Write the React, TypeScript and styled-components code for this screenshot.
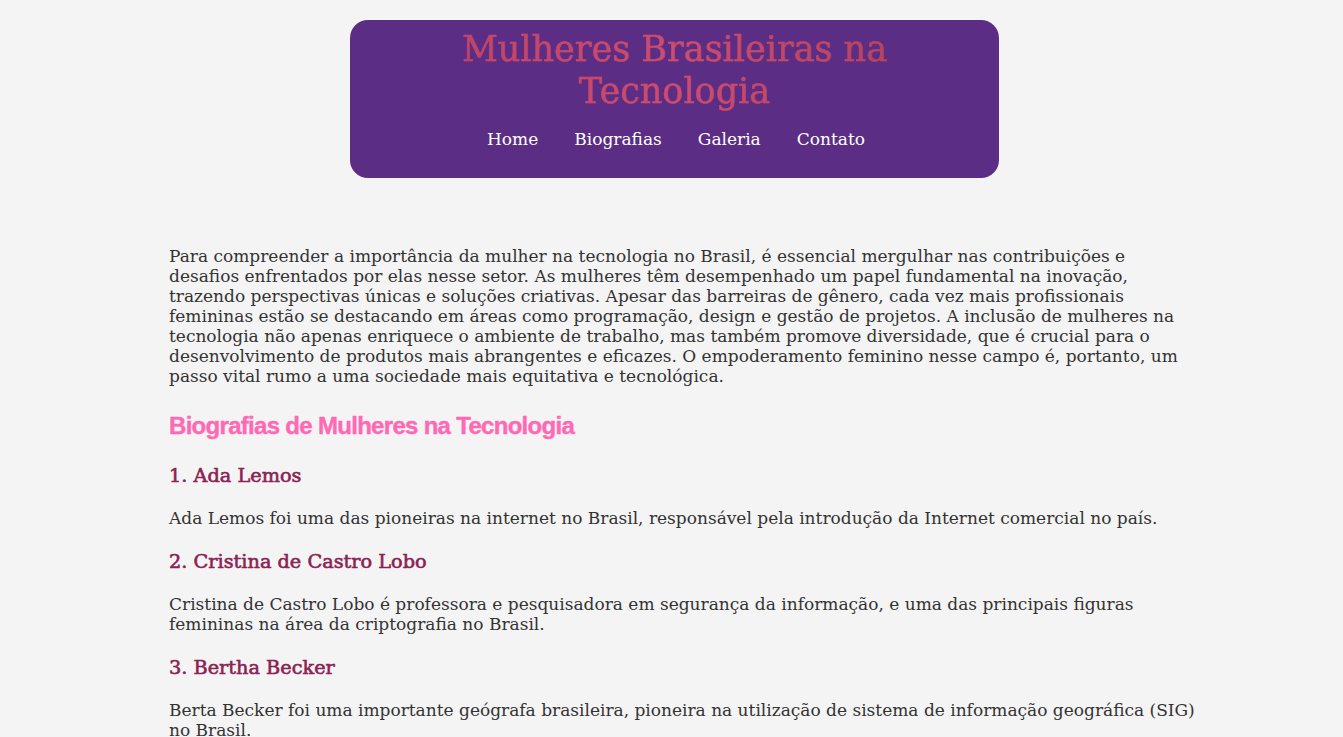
import React from "react";
import styled, { createGlobalStyle } from "styled-components";

const Global = createGlobalStyle`
  html, body { margin: 0; padding: 0; }
  body {
    background: #f4f4f4;
    font-family: "DejaVu Serif", "Liberation Serif", serif;
    color: #333;
  }
`;

const Page = styled.div`
  display: flex;
  flex-direction: column;
  align-items: center;
  padding-top: 20px;
`;

const Header = styled.header`
  width: 649px;
  box-sizing: border-box;
  background: #5b2d84;
  border-radius: 18px;
  padding: 8px 20px 27px;
  display: flex;
  flex-direction: column;
  align-items: center;
  margin-left: 6px;
`;

const Title = styled.h1`
  margin: 0;
  font-family: "DejaVu Serif", serif;
  font-weight: 400;
  font-size: 35px;
  line-height: 42px;
  text-align: center;
  width: 440px;
  -webkit-text-stroke: 0.5px rgba(195, 70, 105, 0.6);
  background: linear-gradient(90deg, #bf4468, #cc4d70 50%, #b5435f);
  -webkit-background-clip: text;
  background-clip: text;
  color: transparent;
`;

const Nav = styled.nav`
  display: flex;
  gap: 36px;
  margin-top: 15px;
  margin-left: 3px;
`;

const NavLink = styled.a`
  color: #fff;
  text-decoration: none;
  font-size: 17px;
  line-height: 24px;
`;

const Main = styled.main`
  box-sizing: border-box;
  width: 100%;
  padding: 0 146px 0 169px;
  margin-top: 48px;
`;

const Para = styled.p`
  margin: 20px 0 21px;
  font-size: 17px;
  line-height: 20px;
  color: #333;
`;

const SectionTitle = styled.h2`
  margin: 26px 0 24px;
  font-family: "Liberation Sans", Arial, sans-serif;
  font-weight: 700;
  font-size: 24px;
  line-height: 28px;
  letter-spacing: -0.7px;
  color: #ff69b4;
  -webkit-text-stroke: 0.4px #ff69b4;
`;

const Name = styled.h3`
  margin: 22px 0 20px;
  font-size: 19.3px;
  line-height: 24px;
  font-weight: 400;
  color: #8b2252;
  -webkit-text-stroke: 0.6px #8b2252;
`;

const bios = [
  {
    name: "1. Ada Lemos",
    text: "Ada Lemos foi uma das pioneiras na internet no Brasil, responsável pela introdução da Internet comercial no país.",
  },
  {
    name: "2. Cristina de Castro Lobo",
    text: "Cristina de Castro Lobo é professora e pesquisadora em segurança da informação, e uma das principais figuras femininas na área da criptografia no Brasil.",
  },
  {
    name: "3. Bertha Becker",
    text: "Berta Becker foi uma importante geógrafa brasileira, pioneira na utilização de sistema de informação geográfica (SIG) no Brasil.",
  },
];

export default function App() {
  return (
    <>
      <Global />
      <Page>
        <Header>
          <Title>Mulheres Brasileiras na Tecnologia</Title>
          <Nav>
            <NavLink href="#">Home</NavLink>
            <NavLink href="#">Biografias</NavLink>
            <NavLink href="#">Galeria</NavLink>
            <NavLink href="#">Contato</NavLink>
          </Nav>
        </Header>
        <Main>
          <Para>
            Para compreender a importância da mulher na tecnologia no Brasil, é essencial mergulhar nas contribuições e desafios enfrentados por elas nesse setor. As mulheres têm desempenhado um papel fundamental na inovação, trazendo perspectivas únicas e soluções criativas. Apesar das barreiras de gênero, cada vez mais profissionais femininas estão se destacando em áreas como programação, design e gestão de projetos. A inclusão de mulheres na tecnologia não apenas enriquece o ambiente de trabalho, mas também promove diversidade, que é crucial para o desenvolvimento de produtos mais abrangentes e eficazes. O empoderamento feminino nesse campo é, portanto, um passo vital rumo a uma sociedade mais equitativa e tecnológica.
          </Para>
          <SectionTitle>Biografias de Mulheres na Tecnologia</SectionTitle>
          {bios.map((b) => (
            <React.Fragment key={b.name}>
              <Name>{b.name}</Name>
              <Para>{b.text}</Para>
            </React.Fragment>
          ))}
        </Main>
      </Page>
    </>
  );
}
